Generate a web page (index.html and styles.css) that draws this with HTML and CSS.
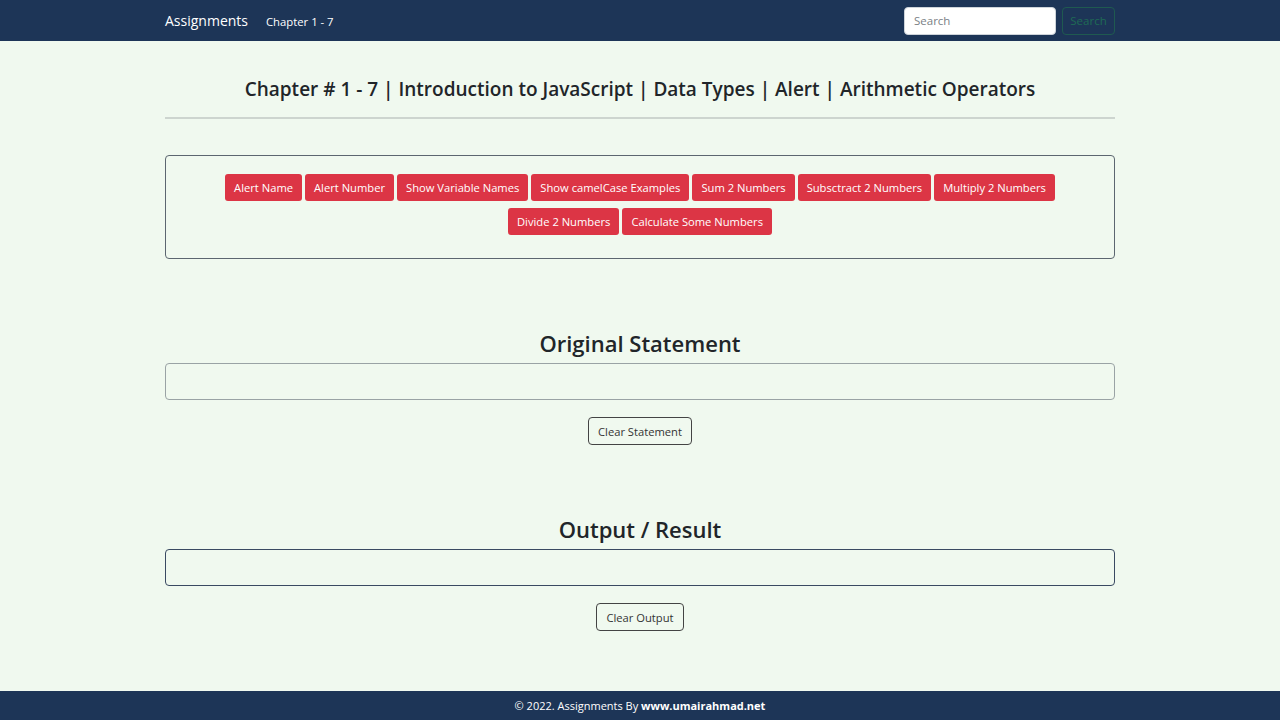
FILE: index.html
```html
<!DOCTYPE html>
<html lang="en">
<head>
<meta charset="utf-8">
<title>Assignments</title>
<link rel="stylesheet" href="styles.css">
</head>
<body>
<nav class="navbar">
  <div class="nav-inner">
    <div class="nav-left">
      <a class="brand" href="#">Assignments</a>
      <a class="nav-link" href="#">Chapter 1 - 7</a>
    </div>
    <form class="nav-search">
      <input class="search-input" type="text" placeholder="Search">
      <button class="search-btn" type="button">Search</button>
    </form>
  </div>
</nav>
<main class="container">
  <h1 class="page-title">Chapter # 1 - 7 | Introduction to JavaScript | Data Types | Alert | Arithmetic Operators</h1>
  <hr class="divider">
  <div class="btn-box">
    <button class="btn-red">Alert Name</button>
    <button class="btn-red">Alert Number</button>
    <button class="btn-red">Show Variable Names</button>
    <button class="btn-red">Show camelCase Examples</button>
    <button class="btn-red">Sum 2 Numbers</button>
    <button class="btn-red">Subsctract 2 Numbers</button>
    <button class="btn-red">Multiply 2 Numbers</button>
    <button class="btn-red">Divide 2 Numbers</button>
    <button class="btn-red">Calculate Some Numbers</button>
  </div>
  <section class="section first">
    <h2 class="section-title">Original Statement</h2>
    <div class="field grey"></div>
    <button class="btn-outline">Clear Statement</button>
  </section>
  <section class="section second">
    <h2 class="section-title">Output / Result</h2>
    <div class="field navy"></div>
    <button class="btn-outline">Clear Output</button>
  </section>
</main>
<footer class="footer">© 2022. Assignments By <b>www.umairahmad.net</b></footer>
</body>
</html>
```
FILE: styles.css
```css
* { box-sizing: border-box; }
html, body { margin: 0; padding: 0; }
body {
  background: #f0f9ef;
  font-family: "Open Sans", "Noto Sans", sans-serif;
  color: #212529;
  height: 720px;
  display: flex;
  flex-direction: column;
}
.navbar {
  background: #1d3557;
  height: 41px;
  flex: none;
}
.nav-inner {
  width: 950px;
  margin: 0 auto;
  height: 100%;
  display: flex;
  align-items: center;
  justify-content: space-between;
}
.nav-left { display: flex; align-items: baseline; gap: 18px; }
.brand {
  color: #fff;
  text-decoration: none;
  font-size: 14px;
}
.nav-link {
  color: #fff;
  text-decoration: none;
  font-size: 11.3px;
}
.nav-search { display: flex; gap: 6px; align-items: center; }
.search-input {
  width: 152px;
  height: 28px;
  border: 1px solid #ced4da;
  border-radius: 4px;
  background: #fff;
  padding: 0 9px;
  font-family: inherit;
  font-size: 11.5px;
  outline: none;
}
.search-input::placeholder { color: #7a7f85; }
.search-btn {
  height: 28px;
  width: 53px;
  padding: 0;
  border: 1px solid #1f5a50;
  border-radius: 4px;
  background: transparent;
  color: #1f6b55;
  font-family: inherit;
  font-size: 11.5px;
}
.container {
  width: 950px;
  margin: 0 auto;
  flex: 1;
}
.page-title {
  margin: 0;
  padding-top: 34px;
  font-size: 19px;
  font-weight: 600;
  text-align: center;
  line-height: 28px;
}
.divider {
  margin: 14px 0 0;
  border: 0;
  border-top: 2px solid #cdd5cf;
}
.btn-box {
  margin-top: 36px;
  border: 1px solid #5c6670;
  border-radius: 4px;
  height: 104px;
  padding: 18px 50px 0;
  display: flex;
  flex-wrap: wrap;
  justify-content: center;
  align-content: flex-start;
  gap: 7px 3px;
}
.btn-red {
  background: #dc3545;
  color: #fff;
  border: 0;
  border-radius: 3px;
  height: 27px;
  padding: 0 9px;
  font-family: inherit;
  font-size: 11.2px;
}
.section { text-align: center; }
.section.first { margin-top: 69px; }
.section.second { margin-top: 69px; }
.section-title {
  margin: 0 0 5px;
  font-size: 22px;
  font-weight: 600;
  line-height: 30px;
}
.field {
  height: 37px;
  border-radius: 4px;
  background: transparent;
}
.field.grey { border: 1px solid #9aa3a5; }
.field.navy { border: 1px solid #3a4a62; }
.btn-outline {
  margin-top: 17px;
  height: 28px;
  padding: 0 9px;
  background: transparent;
  border: 1px solid #444;
  border-radius: 4px;
  color: #333;
  font-family: inherit;
  font-size: 11.2px;
}
.footer {
  flex: none;
  background: #1d3557;
  color: #fff;
  height: 29px;
  text-align: center;
  font-size: 11px;
  line-height: 29px;
}
.footer b { font-weight: 700; }
```
